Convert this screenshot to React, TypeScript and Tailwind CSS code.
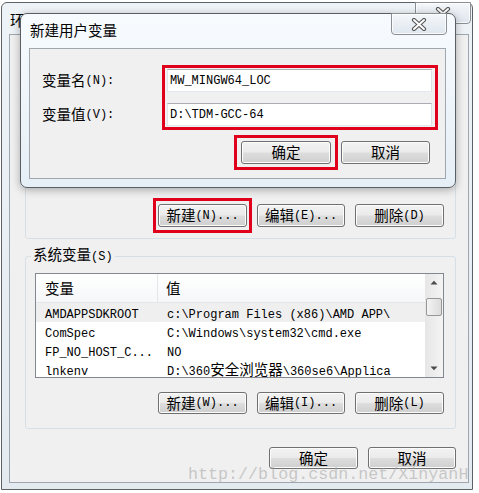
import React from 'react';

const cjkRe = /([\u3400-\u9fff]+)/;

const Mixed: React.FC<{ text: string }> = ({ text }) => (
  <>
    {text.split(cjkRe).map((part, i) =>
      part === '' ? null : cjkRe.test(part) ? (
        <span key={i} className="font-['Noto_Sans_CJK_SC',sans-serif] text-[14.5px] leading-none">
          {part}
        </span>
      ) : (
        <span key={i} className="font-['Liberation_Mono','Noto_Sans_CJK_SC',monospace] text-[12px] leading-none">
          {part}
        </span>
      )
    )}
  </>
);

const Btn: React.FC<{ label: string; className?: string }> = ({ label, className = '' }) => (
  <div
    className={`flex items-center justify-center whitespace-nowrap rounded-[3px] border border-[#707070] bg-[linear-gradient(#f2f2f2_0%,#ebebeb_48%,#dddddd_52%,#cfcfcf_100%)] text-black shadow-[inset_0_0_0_1px_#fcfcfc] ${className}`}
  >
    <Mixed text={label} />
  </div>
);

const CloseX: React.FC = () => (
  <svg width="16" height="13" viewBox="0 0 16 13">
    <path d="M3 2 L13 11 M13 2 L3 11" stroke="#555" strokeWidth="4.2" strokeLinecap="round" />
    <path d="M3 2 L13 11 M13 2 L3 11" stroke="#fff" strokeWidth="2" strokeLinecap="round" />
  </svg>
);

const CloseBtn: React.FC<{ className?: string }> = ({ className = '' }) => (
  <div
    className={`flex items-center justify-center rounded-b-[4px] border border-[#8a8f96] bg-[linear-gradient(#f4f7fa,#dfe6ee)] shadow-[inset_0_0_0_1px_rgba(255,255,255,0.8)] ${className}`}
  >
    <CloseX />
  </div>
);

const rows: [string, string][] = [
  ['AMDAPPSDKROOT', 'c:\\Program Files (x86)\\AMD APP\\'],
  ['ComSpec', 'C:\\Windows\\system32\\cmd.exe'],
  ['FP_NO_HOST_C...', 'NO'],
  ['lnkenv', 'D:\\360安全浏览器\\360se6\\Applica'],
];

const Triangle: React.FC<{ up?: boolean }> = ({ up }) => (
  <svg width="8" height="5" viewBox="0 0 8 5">
    <path d={up ? 'M0.5 4.5 L4 0.8 L7.5 4.5 Z' : 'M0.5 0.5 L4 4.2 L7.5 0.5 Z'} fill="#4a4a4a" />
  </svg>
);

const VarList: React.FC = () => (
  <div className="flex h-[105px] w-[409px] overflow-hidden border border-[#828790] bg-white">
    <div className="flex min-w-0 flex-1 flex-col overflow-hidden">
      <div className="flex h-[29px] shrink-0 items-center border-b border-[#e3e6ea] bg-[linear-gradient(#ffffff,#f6f7f9)]">
        <div className="flex h-full w-[122px] items-center border-r border-[#e3e6ea] pl-[9px]">
          <Mixed text="变量" />
        </div>
        <div className="flex h-full items-center pl-[8px]">
          <Mixed text="值" />
        </div>
      </div>
      {rows.map(([name, value], i) => (
        <div
          key={name}
          className={`flex h-[19px] shrink-0 items-center whitespace-nowrap pt-[2px] ${i === 0 ? 'bg-[#efefef]' : ''}`}
        >
          <div className="w-[122px] shrink-0 pl-[9px]">
            <Mixed text={name} />
          </div>
          <div className="pl-[9px]">
            <Mixed text={value} />
          </div>
        </div>
      ))}
    </div>
    <div className="flex w-[18px] shrink-0 flex-col bg-[linear-gradient(90deg,#e6e6e6,#f4f4f4)]">
      <div className="flex h-[17px] items-center justify-center">
        <Triangle up />
      </div>
      <div className="mx-[1px] mt-[7px] h-[18px] rounded-[2px] border border-[#979797] bg-[linear-gradient(90deg,#f3f3f3,#dcdcdc)]" />
      <div className="flex-1" />
      <div className="flex h-[17px] items-center justify-center">
        <Triangle />
      </div>
    </div>
  </div>
);

export default function App() {
  return (
    <div className="relative h-[493px] w-[479px] overflow-hidden bg-white pl-[1px] pt-[2px] font-['Liberation_Mono','Noto_Sans_CJK_SC',monospace] text-black">
      {/* outer window: 环境变量 */}
      <div className="flex h-[488px] w-[472px] flex-col rounded-t-[6px] border border-[#5e6266] bg-[linear-gradient(#eef3f7,#e3eaf0)]">
        <div className="flex h-[31px] shrink-0 justify-between">
          <div className="ml-[8px] mt-[9px] text-[14.5px] leading-[16px]">
            <span className="font-['Noto_Sans_CJK_SC',sans-serif]">环境变量</span>
          </div>
          <CloseBtn className="-mt-[1px] mr-[1px] h-[22px] w-[56px]" />
        </div>
        <div className="ml-[7px] flex h-[449px] w-[460px] flex-col border border-[#9ea7b0] bg-[#f0f0f0]">
          {/* user variables group */}
          <div className="ml-[15px] mt-[10px] flex h-[194px] w-[431px] shrink-0 flex-col justify-end rounded-[3px] border border-[#d5dfe5]">
            <div className="flex items-center justify-end pb-[5px] pr-[11px]">
              <div className="border-[3px] border-[#e0001b] px-[2px] py-[3px]">
                <Btn label="新建(N)..." className="h-[23px] w-[89px]" />
              </div>
              <Btn label="编辑(E)..." className="ml-[5px] h-[23px] w-[88px]" />
              <Btn label="删除(D)" className="ml-[10px] h-[23px] w-[89px]" />
            </div>
          </div>

          {/* system variables group */}
          <fieldset className="ml-[15px] mt-[8px] w-[431px] rounded-[3px] border border-[#d5dfe5] pb-[14px] pl-[9px] pr-[11px]">
            <legend className="-ml-[4px] px-[2px] leading-[18px]">
              <Mixed text="系统变量(S)" />
            </legend>
            <div className="mt-[8px]">
              <VarList />
            </div>
            <div className="mt-[14px] flex justify-end gap-[10px]">
              <Btn label="新建(W)..." className="h-[22px] w-[89px]" />
              <Btn label="编辑(I)..." className="h-[22px] w-[88px]" />
              <Btn label="删除(L)" className="h-[22px] w-[89px]" />
            </div>
          </fieldset>

          <div className="mt-[18px] flex justify-end gap-[10px] pr-[12px]">
            <Btn label="确定" className="h-[22px] w-[89px]" />
            <Btn label="取消" className="h-[22px] w-[88px]" />
          </div>
        </div>
      </div>

      {/* dialog: 新建用户变量 */}
      <div className="absolute left-[20px] top-[13px] flex h-[175px] w-[436px] flex-col rounded-[7px] border border-[#5a5f66] bg-[linear-gradient(#f7fbfe,#e6eff6)] shadow-[0_2px_8px_rgba(0,0,0,0.3)]">
        <div className="flex h-[34px] shrink-0 justify-between">
          <div className="ml-[9px] mt-[8px] text-[14.5px] leading-[16px]">
            <span className="font-['Noto_Sans_CJK_SC',sans-serif]">新建用户变量</span>
          </div>
          <CloseBtn className="-mt-[1px] mr-[8px] h-[22px] w-[56px]" />
        </div>
        <div className="ml-[8px] flex h-[131px] w-[417px] flex-col border border-[#9ea7b0] bg-[#f0f0f0] pt-[16px]">
          <div className="flex">
            <div className="flex h-[65px] w-[132px] flex-col gap-[11px] pl-[12px] pt-[4px]">
              <div className="flex h-[23px] items-center whitespace-nowrap">
                <Mixed text="变量名(N):" />
              </div>
              <div className="flex h-[23px] items-center whitespace-nowrap">
                <Mixed text="变量值(V):" />
              </div>
            </div>
            <div className="flex h-[65px] w-[276px] flex-col gap-[11px] border-[3px] border-[#e0001b] pl-[2px] pt-[1px]">
              <div className="flex h-[23px] w-[265px] items-center border border-[#abadb3] border-b-[#e3e9ef] border-l-[#e2e3ea] border-r-[#dbdfe6] bg-white pl-[2px]">
                <Mixed text="MW_MINGW64_LOC" />
              </div>
              <div className="flex h-[23px] w-[265px] items-center border border-[#abadb3] border-b-[#e3e9ef] border-l-[#e2e3ea] border-r-[#dbdfe6] bg-white pl-[2px]">
                <Mixed text="D:\TDM-GCC-64" />
              </div>
            </div>
          </div>
          <div className="mt-[5px] flex items-center justify-end gap-[3px] pr-[15px]">
            <div className="border-[3px] border-[#e0001b] px-[4px] py-[3px]">
              <Btn label="确定" className="h-[23px] w-[90px]" />
            </div>
            <Btn label="取消" className="h-[23px] w-[89px]" />
          </div>
        </div>
      </div>

      {/* watermark */}
      <div className="pointer-events-none absolute left-[188px] top-[467px] whitespace-nowrap font-['Liberation_Mono',monospace] text-[16.7px] leading-none text-[rgba(170,170,170,0.6)]">
        http://blog.csdn.net/XinyanH
      </div>
    </div>
  );
}
